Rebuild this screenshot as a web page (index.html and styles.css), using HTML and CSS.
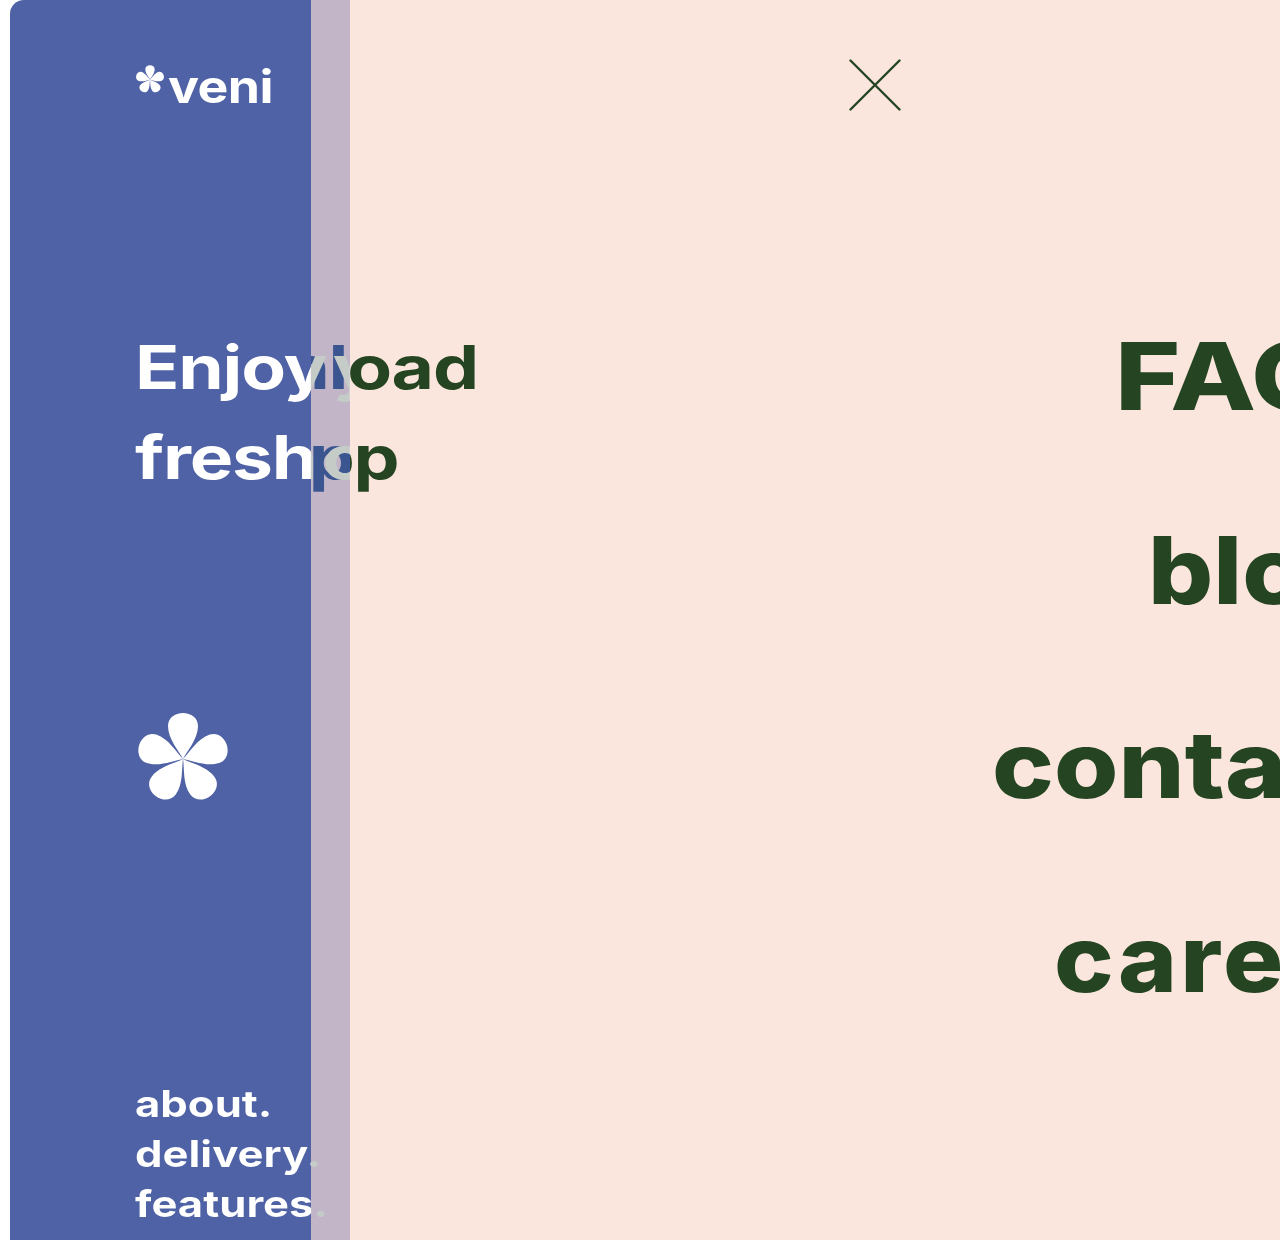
FILE: index.html
```html
<!DOCTYPE html>
<html lang="en">
<head>
<meta charset="UTF-8" />
<meta name="viewport" content="width=device-width, initial-scale=1" />
<title>veni</title>
<link rel="stylesheet" href="styles.css">
</head>
<body>
  <svg class="defs" width="0" height="0">
    <symbol id="flower" viewBox="-48 -48 96 92">
      <g id="petals">
        <path id="petal" d="M0 0C-4-8-15-20-15-33C-15-41-8-46 0-46C8-46 15-41 15-33C15-20 4-8 0 0Z" />
        <use href="#petal" transform="rotate(72)" />
        <use href="#petal" transform="rotate(144)" />
        <use href="#petal" transform="rotate(216)" />
        <use href="#petal" transform="rotate(288)" />
      </g>
    </symbol>
  </svg>

  <aside class="panel">
    <a class="logo" href="#">
      <svg class="logo-star"><use href="#flower" /></svg>
      <span class="logo-name">veni</span>
    </a>

    <div class="hero">
      <div class="hero-back">
        <span>Download</span>
        <span class="back-two">app</span>
      </div>
      <h1 class="hero-front">
        <span>Enjoy your</span>
        <span>fresh organic</span>
      </h1>
    </div>

    <svg class="flower"><use href="#flower" /></svg>

    <ul class="links">
      <li>about.</li>
      <li>delivery.</li>
      <li>features.</li>
    </ul>
  </aside>

  <div class="strip"></div>

  <main class="menu">
    <svg class="close" viewBox="0 0 52 52">
      <path d="M1.5 1.5L50.5 50.5M50.5 1.5L1.5 50.5" />
    </svg>
    <nav class="nav">
      <a class="nav-faq" href="#">FAQ</a>
      <a class="nav-blog" href="#">blog</a>
      <a class="nav-contact" href="#">contact</a>
      <a class="nav-careers" href="#">careers</a>
    </nav>
  </main>
</body>
</html>
```

FILE: styles.css
```css
* {
  box-sizing: border-box;
}
body {
  margin: 0;
  height: 1240px;
  overflow: hidden;
  display: flex;
  padding-left: 10px;
  background: #fff;
  font-family: 'Inter', sans-serif;
  font-weight: 700;
}
.defs {
  position: absolute;
}
/* Painel azul */
.panel {
  width: 301px;
  flex: none;
  padding: 64px 0 0 125px;
  background: #4f62a5;
  border-top-left-radius: 14px;
  color: #fff;
  display: flex;
  flex-direction: column;
  align-items: flex-start;
}
.logo {
  display: flex;
  align-items: flex-start;
  color: #fff;
  text-decoration: none;
  white-space: nowrap;
}
.logo-star {
  width: 30px;
  height: 30px;
  fill: #fff;
  flex: none;
}
.logo-name {
  margin: -3px 0 0 3px;
  font-size: 45px;
  line-height: 52px;
  letter-spacing: -0.5px;
  transform: scaleX(1.15);
  transform-origin: left;
}
/* Titulo, duas camadas. Letra larga com scaleX, por isso os cortes divididos por 1.22 */
.hero {
  position: relative;
  margin-top: 209px;
  font-size: 60px;
  line-height: 90px;
  letter-spacing: -1px;
  white-space: nowrap;
  transform: scaleX(1.22);
  transform-origin: left;
}
.hero-back,
.hero-front {
  margin: 0;
  font: inherit;
  letter-spacing: inherit;
  -webkit-background-clip: text;
  background-clip: text;
  color: transparent;
}
.hero-back {
  position: absolute;
  top: 0;
  left: -10px;
  width: 291px;
  text-align: right;
  background-image: linear-gradient(90deg, transparent 154.3px, #3a5590 154.3px, #3a5590 186.2px, #254522 186.2px);
}
.hero-back span,
.hero-front span {
  display: block;
}
.back-two {
  padding-right: 65px;
}
.hero-front {
  position: relative;
  width: 176.2px;
  overflow: hidden;
  word-spacing: -8px;
  background-image: linear-gradient(90deg, #fff 144.3px, #c5ccc8 144.3px);
}
.flower {
  width: 96px;
  height: 92px;
  margin-top: 209px;
  fill: #fff;
}
.links {
  list-style: none;
  width: 240px;
  margin: auto 0 0;
  padding: 0 0 11px;
  font-size: 37px;
  line-height: 50px;
  white-space: nowrap;
  transform: scaleX(1.18);
  transform-origin: left;
  background-image: linear-gradient(90deg, #fff 149px, #c5ccc8 149px);
  -webkit-background-clip: text;
  background-clip: text;
  color: transparent;
}
/* Faixa */
.strip {
  width: 39px;
  flex: none;
  background: #c1b5c7;
}
/* Menu */
.menu {
  flex: 1;
  min-width: 0;
  padding: 59px 0 0 499px;
  background: #fbe6dd;
  color: #254522;
}
.close {
  display: block;
  width: 52px;
  height: 52px;
  fill: none;
  stroke: #254522;
  stroke-width: 2.4;
  stroke-linecap: round;
}
.nav {
  display: flex;
  flex-direction: column;
  gap: 86px;
  margin-top: 211px;
  font-size: 93px;
  font-weight: 800;
  line-height: 108px;
  white-space: nowrap;
}
.nav a {
  color: inherit;
  text-decoration: none;
  transform: scaleX(1.08);
  transform-origin: left;
}
.nav .nav-faq {
  margin-left: 266px;
  transform: scaleX(1.2);
}
.nav .nav-blog {
  margin-left: 299px;
  transform: scaleX(1.1);
}
.nav .nav-contact {
  margin-left: 143px;
  transform: scaleX(1.12);
}
.nav-careers {
  margin-left: 205px;
  letter-spacing: 3px;
}
```
